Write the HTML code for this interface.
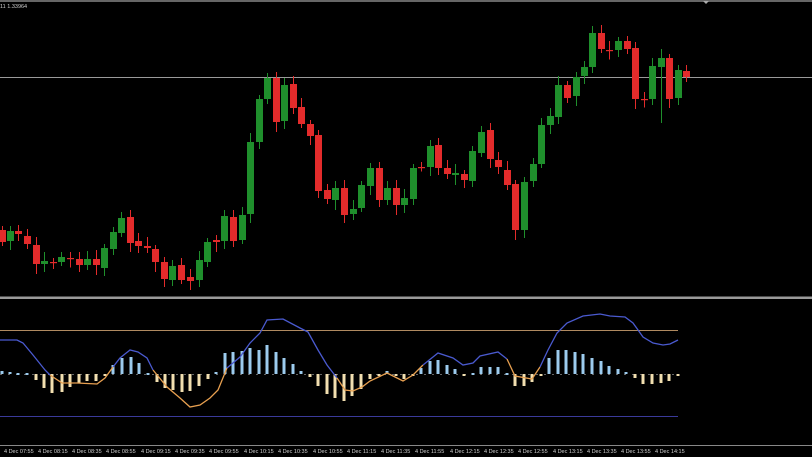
<!DOCTYPE html>
<html><head><meta charset="utf-8"><style>
html,body{margin:0;padding:0;background:#000;width:812px;height:457px;overflow:hidden}
svg{display:block}
text{font-family:"Liberation Sans",sans-serif;fill:#cfcfcf}
</style></head><body>
<svg id="s" width="812" height="457" viewBox="0 0 812 457">
<rect width="812" height="457" fill="#000"/>
<line x1="0" y1="1" x2="812" y2="1" stroke="#888" stroke-width="1.5"/>
<text x="0" y="8" font-size="5.5">11 1.33964</text>
<path d="M703 1 L709 1 L706 4 Z" fill="#aaa"/>
<line x1="0" y1="77.5" x2="812" y2="77.5" stroke="#9a9a9a" stroke-width="1"/>
<rect x="0" y="296.5" width="812" height="2.5" fill="#9a9a9a"/>
<line x1="0" y1="330.5" x2="678" y2="330.5" stroke="#b08a60" stroke-width="1"/>
<line x1="0" y1="416.5" x2="678" y2="416.5" stroke="#3a3a9a" stroke-width="1"/>
<line x1="0" y1="374.5" x2="678" y2="374.5" stroke="#666" stroke-width="1" stroke-dasharray="2,6"/>
<line x1="0" y1="445.5" x2="812" y2="445.5" stroke="#888" stroke-width="1"/>
<g id="c"></g><g id="h"></g><g id="l"></g>
<g font-size="5.5">
<text x="4" y="453">4 Dec 07:55</text>
<text x="38" y="453">4 Dec 08:15</text>
<text x="72" y="453">4 Dec 08:35</text>
<text x="106" y="453">4 Dec 08:55</text>
<text x="141" y="453">4 Dec 09:15</text>
<text x="175" y="453">4 Dec 09:35</text>
<text x="209" y="453">4 Dec 09:55</text>
<text x="244" y="453">4 Dec 10:15</text>
<text x="278" y="453">4 Dec 10:35</text>
<text x="313" y="453">4 Dec 10:55</text>
<text x="347" y="453">4 Dec 11:15</text>
<text x="381" y="453">4 Dec 11:35</text>
<text x="415" y="453">4 Dec 11:55</text>
<text x="450" y="453">4 Dec 12:15</text>
<text x="484" y="453">4 Dec 12:35</text>
<text x="518" y="453">4 Dec 12:55</text>
<text x="553" y="453">4 Dec 13:15</text>
<text x="587" y="453">4 Dec 13:35</text>
<text x="621" y="453">4 Dec 13:55</text>
<text x="655" y="453">4 Dec 14:15</text>
</g>
</svg>
<script>
var NS="http://www.w3.org/2000/svg";
function el(p,t,a){var e=document.createElementNS(NS,t);for(var k in a)e.setAttribute(k,a[k]);p.appendChild(e);return e;}
// x, open, close (y coords)
var C=[[2,230,242],[10,241,231],[18,231,234],[27,236,244],[36,245,264],[44,264,261],[53,262,263],[61,262,257],[70,258,258.5],[79,259,265],[87,265,259],[96,259,265],[104,268,248],[113,249,232],[121,233,218],[130,217,243],[138,241,246],[147,246,248],[155,249,262],[164,262,279],[172,280,266],[181,265,280],[190,277,281],[199,280,260],[207,262,242],[216,240,242],[224,241,216],[233,217,241],[242,240,215],[250,214,142],[259,142,99],[267,99,78],[276,78,122],[284,121,85],[293,84,108],[301,107,124],[310,124,136],[318,135,191],[327,190,199],[335,200,188],[344,188,215],[353,214,209],[361,208,185],[370,186,168],[379,168,200],[387,200,188],[396,188,205],[404,205,198],[413,199,168],[421,167,167.5],[430,167,146],[438,145,168],[447,168,174],[455,175,173],[464,174,180],[472,181,151],[481,153,132],[490,130,159],[498,160,167],[507,170,185],[515,184,230],[524,230,182],[533,181,164],[541,164,125],[550,125,116],[558,117,85],[567,85,98],[576,96,77],[584,76,67],[592,67,33],[601,33,49],[609,50,50.5],[618,50,41],[627,41,49],[635,48,99],[644,99,99.5],[652,99,66],[661,67,58],[669,58,99],[678,98,70],[686,71,77]];
var g=document.getElementById("c");
C.forEach(function(c,i){var x=c[0],o=c[1],cl=c[2];var up=cl<o;var col=up?"#1f8f2c":"#e32b2b";
var t=Math.min(o,cl),b=Math.max(o,cl);var wt=t-4-(i*7%6),wb=b+4+(i*5%7);
if(i==77)wb=123;
el(g,"line",{x1:x+.5,y1:wt,x2:x+.5,y2:wb,stroke:col,"stroke-width":1});
el(g,"rect",{x:x-3,y:t,width:7,height:Math.max(b-t,1.2),fill:col});});
// histogram: x, y end
var H=[[2,371],[10,372],[18,373],[27,373],[36,380],[44,388],[52,393],[62,392],[70,387],[79,383],[87,381],[96,381],[105,376],[113,365],[122,358],[131,357],[139,363],[148,373],[157,382],[165,388],[173,390],[182,392],[190,391],[199,386],[208,379],[216,372],[225,353],[233,352],[242,351],[250,348],[259,350],[267,345],[276,352],[284,358],[293,364],[301,371],[310,377],[318,386],[327,394],[335,398],[344,401],[352,396],[361,389],[370,379],[379,376],[387,371],[396,376],[404,379],[413,376],[421,368],[430,361],[438,360],[447,365],[455,369],[464,376],[473,373],[481,367],[490,367],[498,367],[507,373],[515,386],[524,386],[532,382],[541,376],[549,358],[558,350],[566,350],[575,352],[583,354],[592,358],[601,361],[609,366],[618,369],[626,372],[635,378],[643,384],[652,384],[661,383],[669,381],[678,376]];
var h=document.getElementById("h");
H.forEach(function(b){var z=374;var up=b[1]<z;var t=Math.min(z,b[1]),bt=Math.max(z,b[1]);if(bt-t<1.5){t=z-1;bt=z+1}
el(h,"rect",{x:b[0]-1.5,y:t,width:3,height:bt-t,fill:up?"#9ccbee":"#f2dfb0"});});
var segs=[["#4a5ad0","0,340 17,340 23,343 33,355 45,370 50,375"],["#e8a050","50,375 62,383 77,383 97,384 105,378 113,367"],["#4a5ad0","113,367 120,358 130,350 138,352 147,358 153,370"],["#e8a050","153,370 167,387 180,398 190,407 200,405 210,398 218,390 227,368"],["#4a5ad0","227,368 240,357 250,343 260,333 267,320 283,319 300,328 308,332 318,350 327,365 337,378"],["#e8a050","337,378 345,390 353,391 362,387 370,381 387,373 403,381 413,375 423,365"],["#4a5ad0","423,365 438,353 453,358 463,365 473,363 480,356 498,352 507,359"],["#e8a050","507,359 515,376 532,379 540,367"],["#4a5ad0","540,367 548,350 557,333 567,323 583,316 600,314 610,316 625,317 633,323 643,337 653,343 663,345 670,344 678,340"]];
var l=document.getElementById("l");
segs.forEach(function(s){el(l,"polyline",{points:s[1],fill:"none",stroke:s[0],"stroke-width":1.3});});
</script>
</body></html>
